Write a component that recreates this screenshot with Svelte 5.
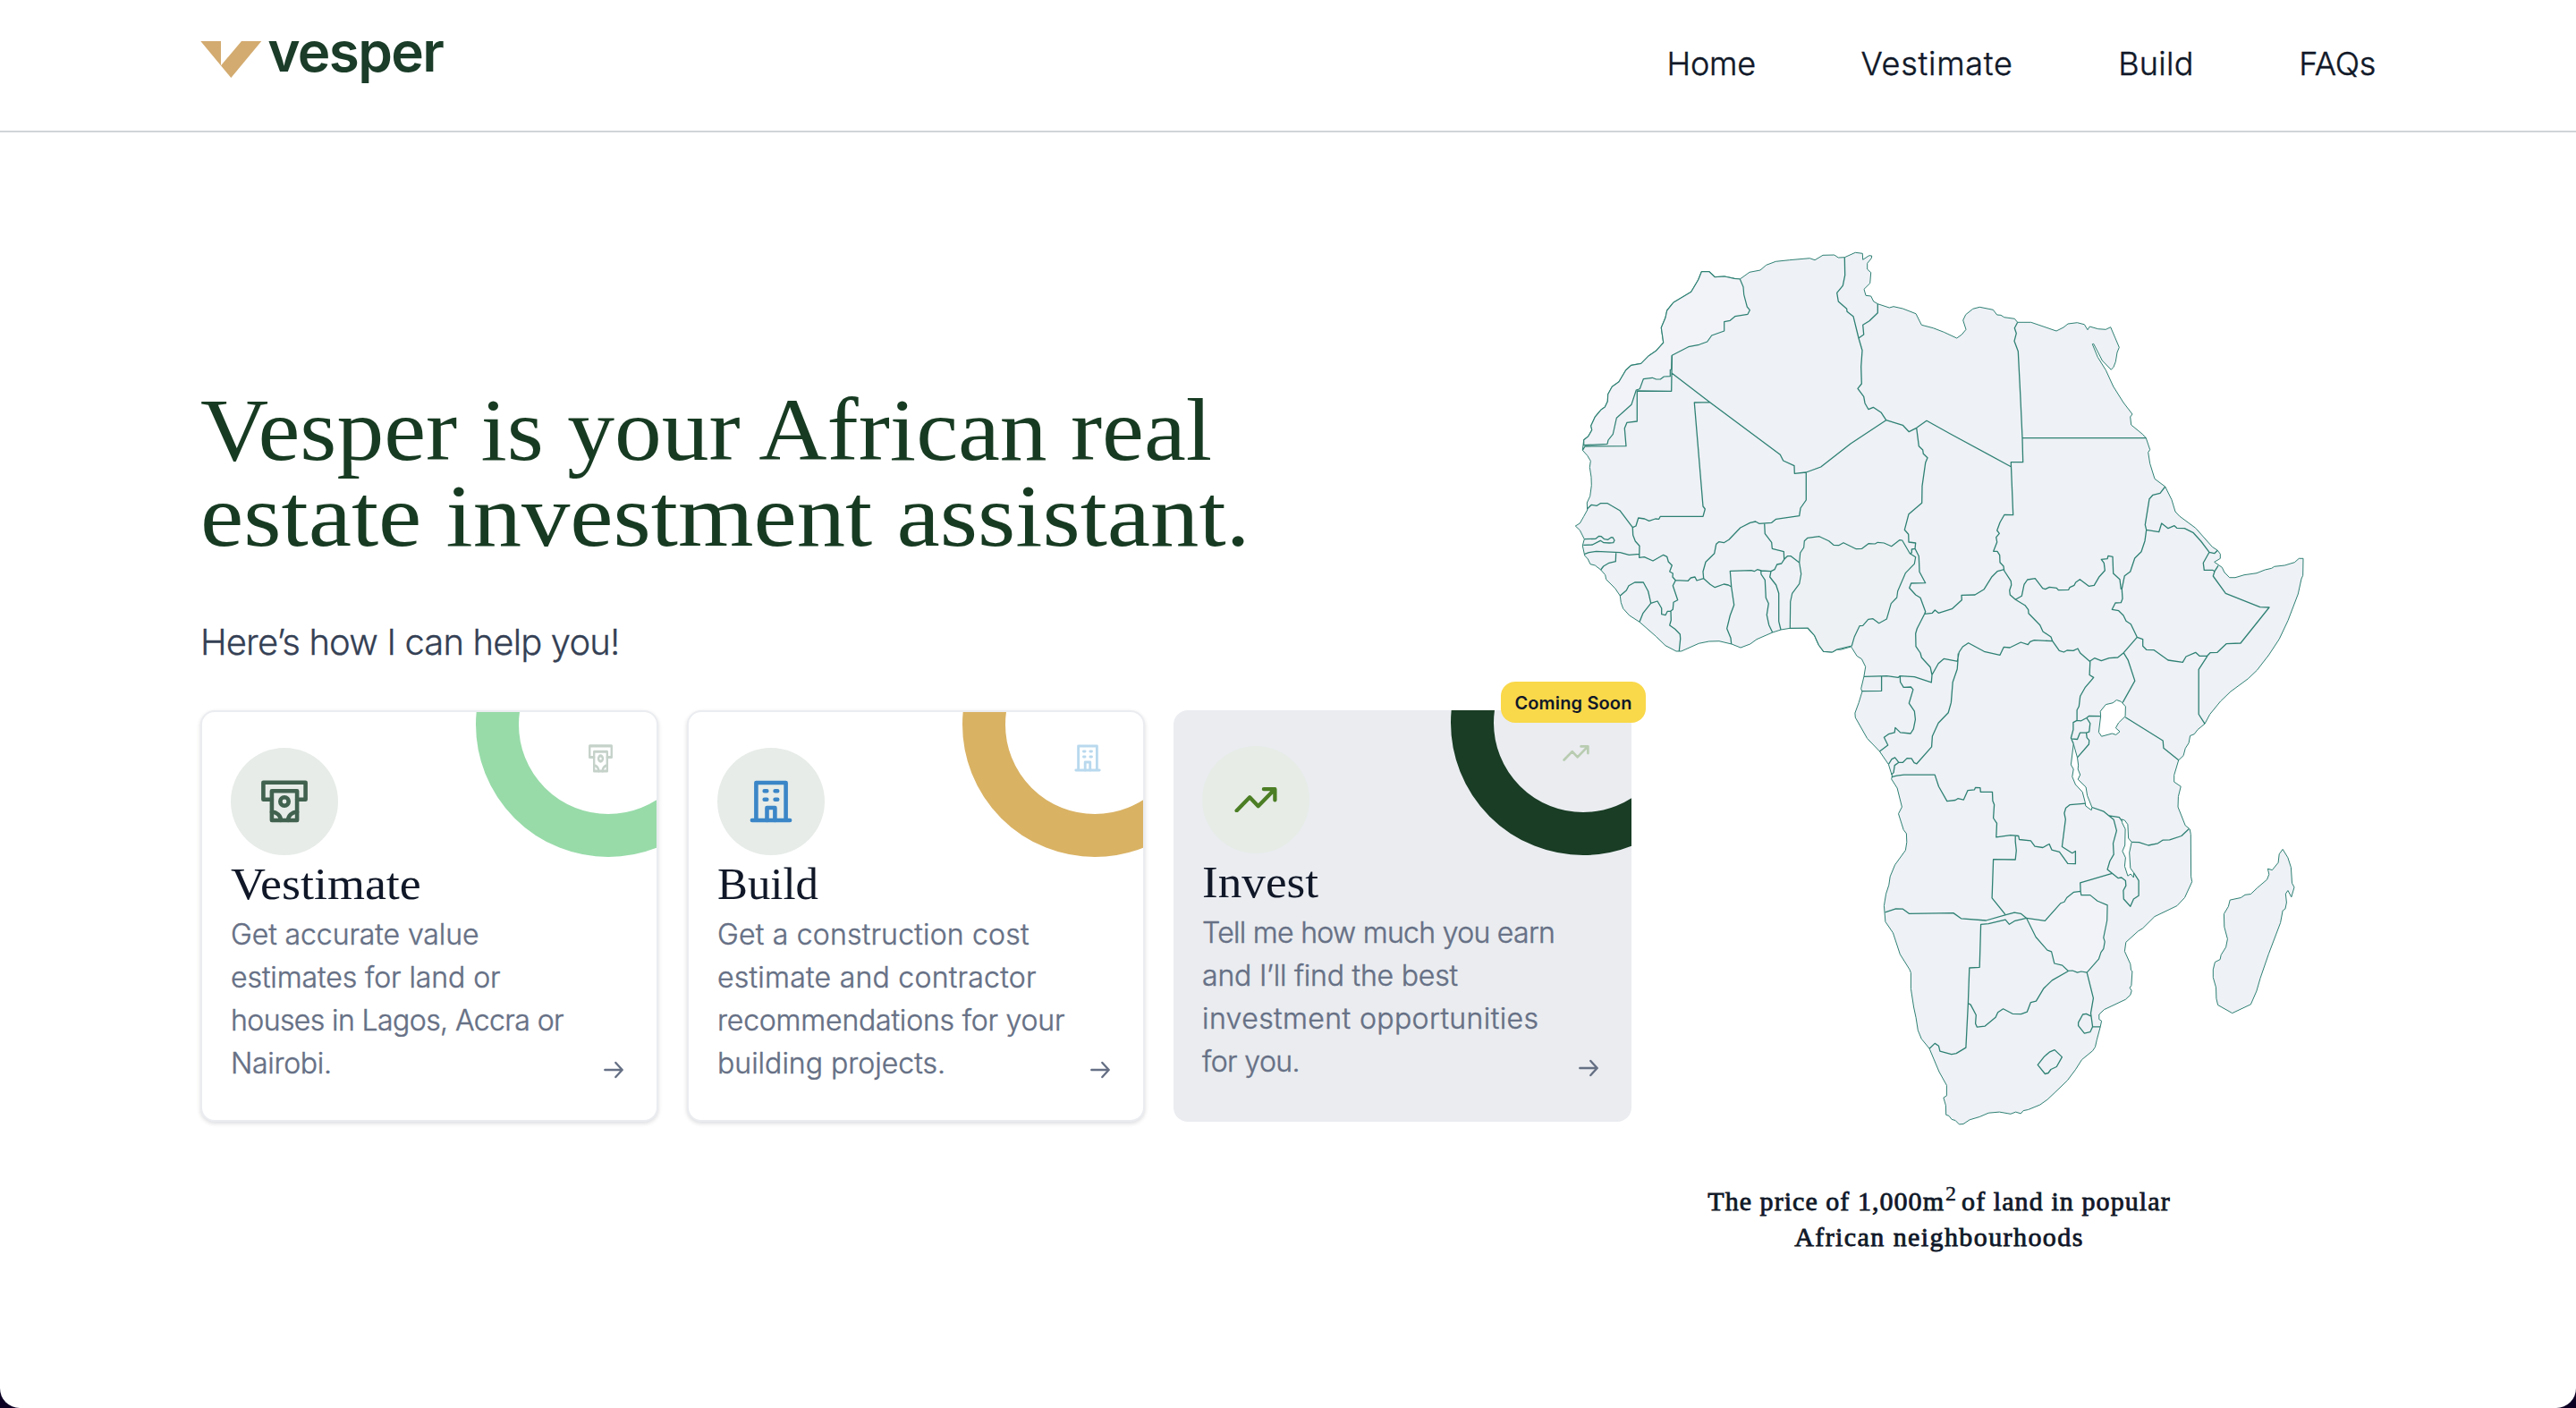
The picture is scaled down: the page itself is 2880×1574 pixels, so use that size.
<script>
  const SERIF = '"Liberation Serif", serif';
  const SANS = 'Inter, sans-serif';
  const ctx = document.createElement('canvas').getContext('2d');

  function inkWidth(text, font) {
    ctx.font = font;
    const m = ctx.measureText(text);
    return m.actualBoundingBoxRight + m.actualBoundingBoxLeft;
  }

  // Letter spacing that makes a run of text span the given width.
  function track(text, font, width) {
    return ((width - inkWidth(text, font)) / (text.length - 1)).toFixed(3) + 'px';
  }

  // Horizontal stretch that widens the serif letterforms to the given width.
  function stretch(text, font, width) {
    return 'scaleX(' + (width / inkWidth(text, font)).toFixed(4) + ')';
  }

  const nav = [
    ['Home', 94.7],
    ['Vestimate', 166.5],
    ['Build', 78.5],
    ['FAQs', 81.5]
  ];

  const headline = [
    ['Vesper is your African real', 1134],
    ['estate investment assistant.', 1164]
  ];

  const cards = [
    {
      id: 'vestimate', title: 'Vestimate', titleWidth: 211.5, icon: 'cash',
      lines: [['Get accurate value', 274], ['estimates for land or', 300], ['houses in Lagos, Accra or', 370], ['Nairobi.', 108]]
    },
    {
      id: 'build', title: 'Build', titleWidth: 112, icon: 'building',
      lines: [['Get a construction cost', 346], ['estimate and contractor', 355], ['recommendations for your', 386], ['building projects.', 251]]
    },
    {
      id: 'invest', title: 'Invest', titleWidth: 129, icon: 'trend', soon: true,
      lines: [['Tell me how much you earn', 392], ['and I’ll find the best', 284.5], ['investment opportunities', 372.5], ['for you.', 107.5]]
    }
  ];

  // The map is digitised on three sheets, each with its own origin and scale.
  const sheets = {
    W: [1740, 260, 3, 3],
    E: [2140, 260, 3, 3],
    S: [2040, 700, 2.8, 2.751]
  };
  function pts(sheet, coords) {
    const [ox, oy, sx, sy] = sheets[sheet];
    return coords.trim().split(/\s+/).map((p) => {
      const [x, y] = p.split(',').map(Number);
      return (ox + x / sx).toFixed(1) + ' ' + (oy + y / sy).toFixed(1);
    });
  }
  const open = (sheet, coords) => 'M' + pts(sheet, coords).join('L');
  const shut = (sheet, coords) => open(sheet, coords) + 'Z';

  const coast = 'M' + [
    ...pts('W', '64,984 79,975 92,952 104,930 103,906 113,884 118,848 117,820 112,787 115,766 104,748 88,730 92,695 107,683 119,662 116,648 130,618 149,595 163,585 172,566 173,542 187,517 210,500 233,461 251,445 284,439 310,413 334,397 359,369 352,319 366,285 371,261 392,235 452,199 476,158 487,131 513,131 532,149 564,147 597,154 616,156 648,133 684,126 704,109 736,97 782,92 850,86 867,92 894,76 932,75 946,84 967,83 1003,67 1027,70 1028,91 1049,77 1058,78 1057,86 1043,103 1043,123 1055,134 1052,170 1032,190 1038,211 1055,213 1064,231 1078,239 1117,252 1131,248 1162,255 1206,272 1225,310 1264,320'),
    ...pts('E', '100,334 143,354 160,342 174,325 164,294 173,275 197,256 220,250 265,259 278,276 291,277 302,284 337,289 347,301 392,301 477,330 501,318 516,306 547,302 571,308 582,326 589,315 617,323 643,325 659,317 688,385 681,402 676,433 669,451 661,460 631,429 602,373 598,374 616,418 643,461 668,516 702,570 732,609 725,618 728,645 766,676 778,689 791,728 785,737 791,775 807,826 842,852 864,896 876,936 890,951 944,991 1000,1054 1018,1066 1027,1078 1027,1093 1007,1105 1033,1123 1041,1140 1058,1157 1077,1157 1107,1148 1149,1142 1177,1131 1199,1126 1208,1120 1243,1116 1276,1106 1291,1093 1305,1093 1304,1150 1299,1161 1288,1212 1254,1301 1225,1363 1190,1416 1150,1468'),
    ...pts('S', '1325,162 1271,201 1239,231 1206,271 1190,300 1168,318 1157,332 1144,337 1140,359 1129,376 1123,398 1108,412 1094,458 1094,479 1115,493 1107,524 1106,556 1129,613 1143,624 1146,640 1147,770 1150,786 1127,835 1103,860 1033,893 996,929 981,938 943,972 939,1000 957,1039 959,1058 963,1061 960,1105 955,1112 961,1121 957,1134 942,1148 875,1179 859,1194 859,1209 867,1214 863,1232 852,1272 847,1294 839,1306 805,1333 785,1364 760,1397 720,1435 697,1456 674,1472 637,1487 622,1490 614,1499 598,1494 582,1500 547,1494 513,1497 485,1509 454,1518 434,1531 421,1532 409,1520 398,1517 389,1506 380,1503 379,1474 372,1450 382,1444 382,1412 358,1370 328,1299 303,1269 292,1243 286,1204 279,1172 270,1115 270,1066 266,1056 236,1009 214,943 190,909 186,860 192,823 201,796 205,770 220,734 253,689 257,664 256,638 247,626 231,577 242,556 227,498 209,470 212,463 200,425 172,385 133,345 96,281 95,267 107,235 117,202 114,192 123,155 128,125 116,101 101,92 86,68 83,63 51,72 38,72 22,80'),
    ...pts('W', '896,1405 880,1383 866,1352 843,1326 784,1327 753,1332 725,1341 672,1364 650,1380 618,1392 588,1380 546,1370 512,1371 478,1378 419,1404 402,1404 366,1385 334,1354 279,1306 245,1284 224,1261 217,1241 214,1218 197,1193 167,1163 164,1148 149,1131 130,1116 114,1112 106,1095 95,1083 88,1050 94,1028 79,998')
  ].join('L') + 'Z';

  const madagascar = shut('S', '1434,686 1450,712 1460,742 1463,790 1470,803 1461,833 1450,813 1443,823 1446,850 1442,869 1434,875 1427,912 1390,1008 1364,1082 1352,1122 1334,1163 1276,1190 1231,1165 1226,1145 1225,1111 1216,1080 1216,1056 1222,1033 1238,1025 1241,1011 1256,987 1261,962 1251,925 1250,885 1264,862 1269,842 1303,835 1316,826 1334,824 1354,805 1385,779 1391,763 1387,746 1401,750 1420,727 1423,701');

  const nigeria = shut('W', '784,1327 785,1238 791,1210 815,1178 821,1145 815,1107 818,1074 830,1056 832,1034 843,1024 882,1019 914,1034 930,1048 947,1049 963,1040 1006,1061 1025,1060 1047,1043 1069,1044 1078,1039 1099,1041 1124,1052 1151,1031 1160,1032 1186,1076 1205,1088 1201,1111 1171,1142 1145,1202 1142,1224 1123,1244 1108,1296 1082,1310 1062,1295 1046,1297 1028,1318 1017,1319 1000,1355 991,1386 941,1398 926,1407 896,1405 880,1383 866,1352 843,1326');

  const morocco = shut('W', '616,156 627,182 629,208 640,249 649,260 642,274 599,281 583,295 563,299 563,330 521,345 506,366 479,376 443,383 388,412 386,459 382,460 382,482 361,483 349,492 335,492 322,487 292,491 280,524 268,528 252,577 202,622 190,676 174,696 171,709 92,713 92,695 107,683 119,662 116,648 130,618 149,595 163,585 172,566 173,542 187,517 210,500 233,461 251,445 284,439 310,413 334,397 359,369 352,319 366,285 371,261 392,235 452,199 476,158 487,131 513,131 532,149 564,147 597,154');

  const zimbabwe = shut('S', '632,898 661,956 697,996 710,1001 719,1037 744,1043 762,1060 776,1059 791,1065 803,1062 821,1065 858,1024 865,1003 873,992 877,970 873,958 884,905 885,858 854,845 831,827 803,827 801,815 780,818 758,835 750,848 739,852 690,906');

  const lakes = [
    shut('S', '880,241 902,236 914,227 928,232 942,247 941,277 920,297 911,313 924,324 912,334 900,330 867,339 858,326 864,277 863,262'),
    shut('S', '779,362 791,404 794,427 793,440 800,457 793,471 818,495 822,521 837,557 835,566 817,553 815,540 807,510 785,487 775,463 779,440 771,426'),
    shut('S', '930,594 939,597 949,610 951,652 961,664 954,696 957,744 967,758 967,773 958,762 949,768 939,738 942,712 932,692 940,674 941,624 931,604')
  ].join('');

  const borders = [
    open('W', '388,412 386,532 271,531 271,633 237,637 229,656 234,716 96,717 88,730'),
    open('W', '388,472 515,569 751,745 761,765 798,782 799,808 838,804 887,786 987,708 1106,629 1162,646 1183,668 1208,655 1242,631 1320,674 1525,785'),
    open('W', '515,569 463,570 492,918 499,927 492,952 349,952 344,961 332,960 311,967 296,960 275,957 267,984 256,989'),
    open('W', '104,926 118,913 136,916 148,908 172,908 213,932 256,989 257,1015 265,1035 279,1051 278,1090 295,1088 324,1101 359,1081 371,1087 376,1104 388,1116 380,1137 391,1143 390,1155 400,1166 442,1168 451,1158 465,1155 471,1167 494,1160'),
    open('W', '94,1028 132,1027 143,1018 151,1019 161,1028 173,1030 184,1022 190,1023 195,1032 191,1040 178,1041 159,1040 148,1033 121,1047 91,1048'),
    open('W', '95,1078 109,1073 134,1069 214,1073 244,1081 278,1078'),
    open('W', '200,1073 199,1103 177,1108 158,1119 149,1131'),
    open('W', '400,1166 391,1184 407,1232 393,1240 391,1264 383,1270 373,1270 366,1283 353,1280 353,1260 339,1236 317,1243 308,1203 292,1173 263,1173 243,1184 235,1200 214,1218'),
    open('W', '317,1243 291,1276 279,1306'),
    open('W', '384,1270 385,1300 380,1317 398,1330 415,1347 416,1362 412,1404'),
    open('W', '494,1160 492,1137 501,1105 530,1076 536,1045 545,1037 562,1040 579,1030 617,990 650,973 668,969 680,976 722,973 737,961 815,950 819,924 838,897 838,804'),
    open('W', '698,976 700,1010 722,1039 724,1060 763,1070 764,1096 755,1110 740,1113 732,1130 720,1136 688,1134 674,1130 664,1136 654,1133 583,1135 587,1188 577,1182 562,1179 532,1190 516,1180 494,1160'),
    open('W', '764,1096 775,1085 787,1085 815,1107'),
    open('W', '587,1188 596,1249 583,1284 572,1328 585,1360 587,1380'),
    open('W', '686,1134 687,1146 700,1165 703,1225 712,1244 706,1282 713,1316 725,1341'),
    open('W', '720,1136 716,1155 737,1182 746,1210 746,1304 753,1332'),
    open('W', '1208,655 1216,716 1229,729 1231,742 1245,755 1238,772 1227,850 1226,907 1182,944 1168,997 1181,1012 1182,1038 1205,1041 1203,1060 1216,1085 1218,1138 1238,1175 1190,1176 1184,1192 1205,1215 1221,1225 1238,1271 1235,1279 1210,1328 1205,1345 1206,1388 1221,1410 1225,1425 1255,1458'),
    open('W', '1186,1076 1192,1074 1192,1062 1203,1060'),
    open('W', '967,83 968,143 961,178 941,202 946,231 974,256 975,265 996,281 1014,354 1026,395 1022,450 1024,507 1011,523 1031,550 1035,572 1047,593 1063,586 1090,604 1106,629'),
    open('W', '1078,239 1078,269 1050,296 1028,310 1031,342 1014,354'),
    open('E', '347,301 337,320 343,338 336,364 349,398 356,540 363,689 365,770 325,770 332,947 303,946 288,972 278,999 286,1009 275,1022 278,1038 266,1069 279,1069 287,1082 288,1106 300,1119 302,1134 325,1169 326,1182 320,1200 322,1215 340,1231 372,1250 383,1265 384,1277 422,1316 432,1338 459,1356 464,1370 487,1402 502,1407 513,1401 534,1402 549,1395 557,1410 589,1438 605,1427 628,1436 654,1427 683,1425 703,1409 748,1357 767,1364 767,1387 779,1399 805,1400 852,1434 901,1441 912,1422 944,1408 957,1420 983,1420 993,1409 1017,1408 1047,1379 1095,1377 1191,1257 1160,1256 1045,1210 1003,1152 1008,1136'),
    open('E', '363,689 778,689'),
    open('E', '35,1279 61,1276 70,1266 82,1276 127,1262 160,1232 159,1216 204,1215 235,1196 261,1154 279,1136 302,1130'),
    open('E', '340,1231 361,1219 369,1180 380,1164 406,1160 431,1193 440,1196 454,1189 478,1192 484,1199 518,1198 522,1190 537,1183 542,1173 556,1163 586,1186 604,1183 621,1154 640,1133 637,1108 628,1096 648,1094 651,1084 666,1087 668,1143 690,1163 694,1196'),
    open('E', '842,852 825,874 801,880 789,893 775,980 779,997 774,1034 762,1070 740,1092 725,1137 706,1151 697,1195 699,1228 694,1241 675,1242 664,1264 686,1268 702,1284 711,1303 727,1313 748,1357'),
    open('E', '779,997 821,1004 830,975 852,992 873,983 881,991 907,992 937,1007 962,1035 990,1072 1007,1076 1018,1066'),
    open('E', '990,1072 970,1108 973,1132 1001,1132 1008,1136 1020,1117'),
    open('E', '464,1370 403,1367 389,1372 382,1382 358,1374 321,1392 301,1390 288,1417 235,1405 182,1376 163,1389 151,1407 145,1438'),
    open('S', '331,127 336,150 334,173 281,156 236,153 230,158 195,153 123,155'),
    open('S', '336,150 356,115 373,100 417,108 415,132 401,172 396,235 387,266 356,298 337,338 335,371 288,423 280,420 272,407 258,406 245,419 232,419 220,404 210,409 200,425'),
    open('S', '418,84 417,108'),
    open('S', '232,419 219,428 216,450 209,457'),
    open('S', '178,155 178,199 117,200'),
    open('S', '236,155 237,172 247,188 270,187 277,195 264,237 281,262 284,287 278,316 269,330 237,327 221,312 219,327 200,332 186,342 198,366 172,385'),
    open('S', '209,464 226,460 248,457 345,457 357,493 383,538 409,535 417,530 435,534 448,505 469,503 472,496 487,497 488,510 525,510 526,537 531,549 528,590 539,606 537,649 582,643 607,645 609,656 645,660 658,677 683,681 703,670 711,688 735,694 761,730 785,731 785,692 775,698 743,678 754,594 750,575 755,559 768,549 818,545'),
    open('S', '597,645 597,662 600,690 597,718 528,717 524,836 565,886'),
    open('S', '189,880 223,869 245,870 264,884 403,882 427,899 505,905 565,888 594,881 614,884 632,898'),
    open('S', '632,898 596,906 578,917 566,903 513,915 489,917 485,1049 453,1051 449,1160 442,1296 412,1314 397,1317 361,1307 357,1291 345,1283 328,1299'),
    open('S', '449,1160 457,1164 474,1196 472,1222 477,1233 502,1230 535,1203 542,1188 559,1177 588,1192 615,1193 634,1186 645,1157 662,1153 685,1115 712,1089 762,1061'),
    open('S', '801,815 800,789 900,760'),
    open('S', '821,1065 841,1144 833,1190 839,1232 863,1232'),
    open('S', '833,1199 819,1192 808,1194 794,1219 794,1229 813,1252 831,1248 839,1232'),
    shut('S', '720,1303 743,1325 726,1355 708,1363 700,1374 690,1377 667,1349 688,1323 705,1309'),
    open('S', '837,557 874,570 890,583 905,595 914,629 903,668 905,702 893,722 885,748 900,760 919,775 929,773 942,783 943,798 935,813 936,839 957,862 967,839 983,829 983,782 967,758'),
    open('S', '890,583 922,588 930,598'),
    open('S', '961,664 984,665 1013,674 1043,668 1058,658 1080,657 1117,645 1140,624'),
    open('S', '831,108 829,150 842,158 815,189 800,215 796,247 790,258 790,290 778,296 778,318 771,344 779,362'),
    open('S', '936,82 950,105 971,168 933,235'),
    open('S', '790,290 803,291 820,282 828,276 864,277'),
    open('S', '820,282 831,299 828,325 819,328 799,328 791,348 771,346'),
    open('S', '819,328 821,343 828,351 827,363 791,404'),
    open('S', '941,280 1059,352 1061,375 1108,412'),
    open('S', '1198,92 1171,133 1171,271 1190,300')
  ].join('');
</script>

{#snippet glyph(name)}
  {#if name === 'cash'}
    <svg class="cash" viewBox="0 0 52 48" preserveAspectRatio="none">
      <path d="M11.9 21.7H2.4V2.8H49.6V21.7H40.1" />
      <path d="M11.9 12.3H40.1V45H11.9Z" />
      <circle cx="26" cy="24" r="4.7" />
      <path d="M11.9 35.7a10 9.3 0 0 1 10 9.3M40.1 35.7a10 9.3 0 0 0-10 9.3" />
    </svg>
  {:else if name === 'building'}
    <svg class="building" viewBox="0 0 48 48" preserveAspectRatio="none">
      <path d="M2.9 45H45.1M7.4 45V3H40.6V45" />
      <path d="M19.5 45V31H28.4V45" />
      <path d="M16.7 12.3h2.6M28.6 12.3h2.6M16.7 21.7h2.6M28.6 21.7h2.6" />
    </svg>
  {:else}
    <svg class="trend" viewBox="0 0 48 28.6">
      <path d="M2.6 26.3 17.2 11.2 26.7 21.3 45.2 2.2M32.9 2.2H45.4V14.4" />
    </svg>
  {/if}
{/snippet}

<div class="page">
  <header>
    <svg class="logo" viewBox="0 0 272 52">
      <path class="mark" d="M0.3 0H23V27.3L46 0H68.3L34.3 41Z" />
      <text x="75.2" y="34.3" style:letter-spacing={track('vesper', '600 62px ' + SANS, 196)}>vesper</text>
    </svg>
    <nav>
      {#each nav as [label, width]}
        <a href="#{label.toLowerCase()}" style:letter-spacing={track(label, '300 36px ' + SANS, width)}>{label}</a>
      {/each}
    </nav>
  </header>

  <main>
    <section class="intro">
      <h1>
        {#each headline as [line, width]}
          <span style:transform={stretch(line, '400 100px ' + SERIF, width)}>{line}</span>
        {/each}
      </h1>
      <p class="lead" style:letter-spacing={track('Here’s how I can help you!', '300 40px ' + SANS, 463)}>Here’s how I can help you!</p>

      <div class="cards">
        {#each cards as card}
          <article class="card {card.id}">
            <div class="decor">
              <span class="ring"></span>
              <span class="mini">{@render glyph(card.icon)}</span>
            </div>
            <span class="badge-icon">{@render glyph(card.icon)}</span>
            <h2 style:transform={stretch(card.title, '400 50px ' + SERIF, card.titleWidth)}>{card.title}</h2>
            <div class="foot">
              <p>
                {#each card.lines as [line, width]}
                  <span style:letter-spacing={track(line, '300 32px ' + SANS, width)}>{line}</span>
                {/each}
              </p>
              <svg class="arrow" viewBox="0 0 24 24">
                <path d="M4.75 12H19.25M13.75 6 19.25 12 13.75 18" />
              </svg>
            </div>
            {#if card.soon}
              <span class="soon">Coming Soon</span>
            {/if}
          </article>
        {/each}
      </div>
    </section>

    <section class="atlas">
      <svg class="map" viewBox="1760 280 816 980">
        <path class="land" d={coast} />
        <path class="pale" d={morocco} />
        <path class="land" d={madagascar} />
        <path class="home" d={nigeria} />
        <path class="pale" d={zimbabwe} />
        <path class="borders" d={borders} />
        <path class="lakes" d={lakes} />
      </svg>
      <div class="caption">
        <span class="row">
          <span style:letter-spacing={track('The price of 1,000m', '400 30px ' + SERIF, 263.4)}>The price of 1,000m</span><sup>2</sup>
          <span style:letter-spacing={track('of land in popular', '400 30px ' + SERIF, 231.6)}>of land in popular</span>
        </span>
        <span class="row" style:letter-spacing={track('African neighbourhoods', '400 30px ' + SERIF, 321.5)}>African neighbourhoods</span>
      </div>
    </section>
  </main>
</div>

<style>
  :global(body) {
    background: #0c0023;
  }
  .page {
    box-sizing: border-box;
    width: 2880px;
    height: 1574px;
    overflow: hidden;
    background: #fff;
    border-radius: 0 0 22px 22px;
    font-family: Inter, sans-serif;
    color: #101828;
  }
  header {
    box-sizing: border-box;
    display: flex;
    justify-content: space-between;
    align-items: flex-start;
    height: 148px;
    padding: 44px 224px 0;
    border-bottom: 2px solid #d0d5d9;
  }
  .logo {
    width: 272px;
    height: 52px;
    margin-top: 2px;
    overflow: visible;
  }
  .mark {
    fill: #d3ab70;
  }
  .logo text {
    font: 600 62px Inter, sans-serif;
    fill: #1a3c28;
  }
  nav {
    display: flex;
    gap: 117.6px;
  }
  nav a {
    font-size: 36px;
    font-weight: 300;
    line-height: 54px;
    color: #101828;
    text-decoration: none;
    -webkit-text-stroke: 0.45px #101828;
  }
  main {
    display: flex;
    align-items: flex-start;
    padding-left: 224px;
  }
  .intro {
    flex: none;
    width: 1600px;
    padding-top: 285px;
  }
  h1 {
    margin: 0;
    font: 400 100px/96px "Liberation Serif", serif;
    color: #173b22;
  }
  h1 span,
  .foot p span {
    display: block;
    white-space: nowrap;
  }
  h1 span {
    width: max-content;
    transform-origin: 0 50%;
  }
  .lead {
    margin: 63px 0 46px;
    font-size: 40px;
    font-weight: 300;
    line-height: 60px;
    color: #344054;
    -webkit-text-stroke: 0.3px #344054;
  }
  .cards {
    display: flex;
    gap: 32px;
  }
  .card {
    position: relative;
    box-sizing: border-box;
    width: 512px;
    height: 460px;
    padding: 40px 32px;
    border: 2px solid #eaecf0;
    border-radius: 16px;
    background: #fff;
    box-shadow: 0 2px 4px rgba(16, 24, 40, 0.09), 0 2px 6px rgba(16, 24, 40, 0.06);
  }
  .invest {
    border: 0;
    background: #eaecf0;
    box-shadow: none;
  }
  .decor {
    position: absolute;
    inset: 0;
    overflow: hidden;
    border-radius: 14px;
  }
  .ring {
    position: absolute;
    top: -134px;
    right: -94px;
    box-sizing: border-box;
    width: 296px;
    height: 296px;
    border: 48px solid #98dba9;
    border-radius: 50%;
  }
  .build .ring {
    border-color: #d9b264;
  }
  .invest .ring {
    border-color: #193d25;
  }
  .badge-icon {
    display: flex;
    align-items: center;
    justify-content: center;
    width: 120px;
    height: 120px;
    border-radius: 50%;
    background: #e7ece8;
  }
  .invest .badge-icon {
    background: #e7ece7;
  }
  svg {
    display: block;
    flex: none;
  }
  .cash,
  .building,
  .trend {
    width: 48px;
    height: 48px;
    fill: none;
    stroke: #41624f;
    stroke-width: 4.6;
    stroke-linecap: round;
    stroke-linejoin: round;
  }
  .cash {
    width: 52px;
  }
  .building {
    stroke: #3b86c7;
  }
  .trend {
    height: 28.6px;
    stroke: #4c7e25;
    stroke-width: 4.3;
  }
  .mini {
    position: absolute;
    top: 36px;
    right: 49px;
  }
  .mini .cash {
    width: 27px;
    height: 32px;
    stroke: #c5d2ca;
  }
  .build .mini {
    right: 47px;
  }
  .mini .building {
    width: 30px;
    height: 31px;
    stroke: #b9d9ee;
  }
  .invest .mini {
    top: 39px;
    right: 47px;
  }
  .mini .trend {
    width: 30px;
    height: 18px;
    stroke: #b9ccb1;
  }
  h2 {
    width: max-content;
    margin: 0;
    font: 400 50px/64px "Liberation Serif", serif;
    color: #101828;
    transform-origin: 0 50%;
  }
  .foot {
    display: flex;
    justify-content: space-between;
    align-items: flex-end;
  }
  .foot p {
    position: relative;
    top: 1px;
    margin: 0;
    font-size: 32px;
    font-weight: 300;
    line-height: 48px;
    color: #667085;
    -webkit-text-stroke: 0.45px #667085;
  }
  .arrow {
    width: 32px;
    height: 32px;
    fill: none;
    stroke: #667085;
    stroke-width: 1.8;
    stroke-linecap: round;
    stroke-linejoin: round;
  }
  .soon {
    position: absolute;
    top: -32px;
    right: -16px;
    width: 162px;
    height: 46px;
    border-radius: 16px;
    background: #f9d84a;
    font-size: 20px;
    font-weight: 600;
    line-height: 48px;
    letter-spacing: 0.15px;
    text-align: center;
    color: #101828;
  }
  .atlas {
    flex: none;
    display: flex;
    flex-direction: column;
    align-items: center;
    width: 816px;
    margin-left: -64px;
    padding-top: 132px;
  }
  .map {
    width: 816px;
    height: 980px;
  }
  .map path {
    stroke: #2e8073;
    stroke-width: 1;
    stroke-linejoin: round;
  }
  .land {
    fill: #eef1f6;
  }
  .pale {
    fill: #f2f3f8;
  }
  .home {
    fill: #edf1f3;
  }
  .map .home,
  .map .pale {
    stroke-width: 1.2;
  }
  .map .borders {
    fill: none;
    stroke-width: 1.3;
  }
  .lakes {
    fill: #fff;
  }
  .caption {
    display: flex;
    flex-direction: column;
    align-items: center;
    margin-top: 63px;
    font: 400 30px/40px "Liberation Serif", serif;
    color: #101828;
    -webkit-text-stroke: 0.8px #101828;
  }
  .row {
    display: flex;
    white-space: nowrap;
  }
  sup {
    margin: -4px 6px 0 1px;
    font-size: 24px;
    line-height: 30px;
    -webkit-text-stroke-width: 0.4px;
  }
</style>
